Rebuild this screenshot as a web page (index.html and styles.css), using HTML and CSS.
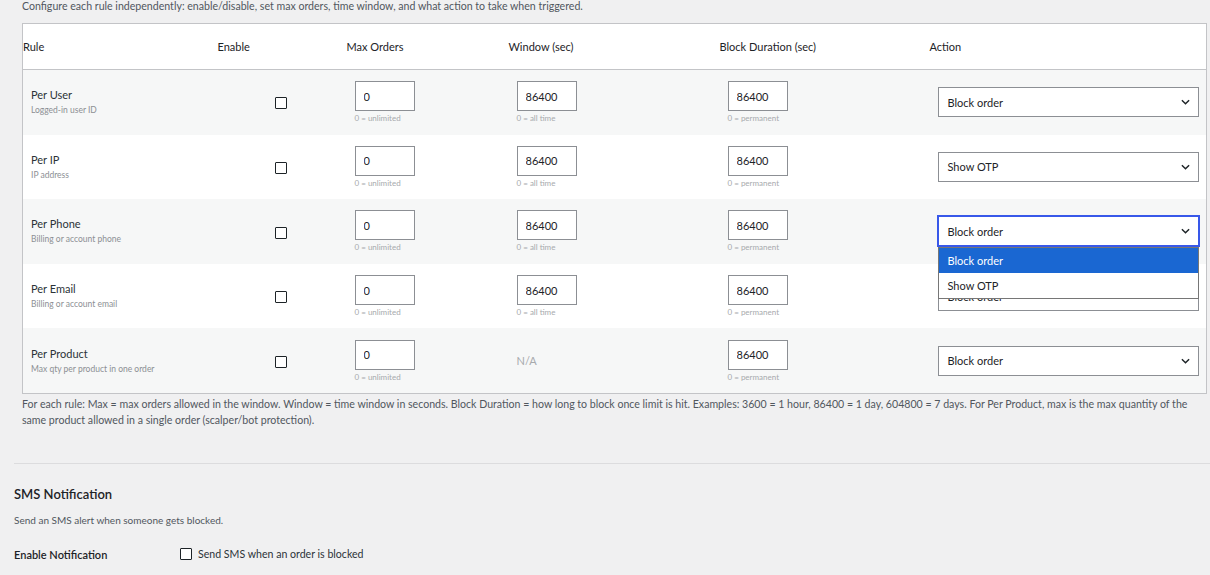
FILE: index.html
```html
<!DOCTYPE html>
<html lang="en">

<head>
    <meta charset="UTF-8">
    <meta name="viewport" content="width=device-width, initial-scale=1.0">
    <title>Order Limits</title>

    <link rel="stylesheet" href="styles.css">
</head>

<body>

    <div class="wrap">
        <div class="rules">
            <p class="intro">Configure each rule independently: enable/disable, set max orders, time window, and what action to take when triggered.</p>

            <table class="rules-table">
                <colgroup>
                    <col class="col-rule">
                    <col class="col-enable">
                    <col class="col-max">
                    <col class="col-window">
                    <col class="col-block">
                    <col>
                </colgroup>
                <thead>
                    <tr>
                        <th>Rule</th>
                        <th>Enable</th>
                        <th>Max Orders</th>
                        <th>Window (sec)</th>
                        <th>Block Duration (sec)</th>
                        <th>Action</th>
                    </tr>
                </thead>
                <tbody>
                    <tr>
                        <td><div class="rule-name">Per User</div><div class="rule-desc">Logged-in user ID</div></td>
                        <td class="center"><input type="checkbox" class="check"></td>
                        <td><input type="text" class="num" value="0"><div class="hint">0 = unlimited</div></td>
                        <td><input type="text" class="num" value="86400"><div class="hint">0 = all time</div></td>
                        <td><input type="text" class="num" value="86400"><div class="hint">0 = permanent</div></td>
                        <td><div class="select">Block order</div></td>
                    </tr>
                    <tr>
                        <td><div class="rule-name">Per IP</div><div class="rule-desc">IP address</div></td>
                        <td class="center"><input type="checkbox" class="check"></td>
                        <td><input type="text" class="num" value="0"><div class="hint">0 = unlimited</div></td>
                        <td><input type="text" class="num" value="86400"><div class="hint">0 = all time</div></td>
                        <td><input type="text" class="num" value="86400"><div class="hint">0 = permanent</div></td>
                        <td><div class="select">Show OTP</div></td>
                    </tr>
                    <tr>
                        <td><div class="rule-name">Per Phone</div><div class="rule-desc">Billing or account phone</div></td>
                        <td class="center"><input type="checkbox" class="check"></td>
                        <td><input type="text" class="num" value="0"><div class="hint">0 = unlimited</div></td>
                        <td><input type="text" class="num" value="86400"><div class="hint">0 = all time</div></td>
                        <td><input type="text" class="num" value="86400"><div class="hint">0 = permanent</div></td>
                        <td>
                            <div class="select-holder">
                                <div class="select focused">Block order</div>
                                <ul class="options">
                                    <li class="active">Block order</li>
                                    <li>Show OTP</li>
                                </ul>
                            </div>
                        </td>
                    </tr>
                    <tr>
                        <td><div class="rule-name">Per Email</div><div class="rule-desc">Billing or account email</div></td>
                        <td class="center"><input type="checkbox" class="check"></td>
                        <td><input type="text" class="num" value="0"><div class="hint">0 = unlimited</div></td>
                        <td><input type="text" class="num" value="86400"><div class="hint">0 = all time</div></td>
                        <td><input type="text" class="num" value="86400"><div class="hint">0 = permanent</div></td>
                        <td><div class="select">Block order</div></td>
                    </tr>
                    <tr>
                        <td><div class="rule-name">Per Product</div><div class="rule-desc">Max qty per product in one order</div></td>
                        <td class="center"><input type="checkbox" class="check"></td>
                        <td><input type="text" class="num" value="0"><div class="hint">0 = unlimited</div></td>
                        <td><span class="na">N/A</span></td>
                        <td><input type="text" class="num" value="86400"><div class="hint">0 = permanent</div></td>
                        <td><div class="select">Block order</div></td>
                    </tr>
                </tbody>
            </table>

            <p class="note">For each rule: Max = max orders allowed in the window. Window = time window in seconds. Block Duration = how long to block once limit is hit. Examples: 3600 = 1 hour, 86400 = 1 day, 604800 = 7 days. For Per Product, max is the max quantity of the same product allowed in a single order (scalper/bot protection).</p>
        </div>

        <hr class="divider">

        <h2 class="section-title">SMS Notification</h2>
        <p class="section-desc">Send an SMS alert when someone gets blocked.</p>

        <div class="field-row">
            <div class="field-label">Enable Notification</div>
            <label class="field-input"><input type="checkbox" class="check"> Send SMS when an order is blocked</label>
        </div>
    </div>

</body>

</html>
```

FILE: styles.css
```css
body {
    font-family: 'Lato', sans-serif;
    font-size: 11px;
    margin: 0;
    padding: 0;
    background-color: #f0f0f1;
    color: #1d2327;
    overflow: hidden;
}

.wrap {
    padding-left: 14px;
}

.rules {
    padding-left: 8px;
    padding-right: 3px;
}

.intro {
    margin: 0;
    font-size: 10.6px;
    line-height: 13px;
    color: #50575e;
}

.rules-table {
    width: 100%;
    margin-top: 10px;
    border: 1px solid #c3c4c7;
    border-collapse: collapse;
    table-layout: fixed;
    background-color: #fff;
}

.col-rule { width: 195px; }
.col-enable { width: 129px; }
.col-max { width: 162px; }
.col-window { width: 211px; }
.col-block { width: 210px; }

.rules-table th {
    height: 45px;
    padding: 0;
    text-align: left;
    font-weight: 400;
    color: #1d2327;
    border-bottom: 1px solid #c3c4c7;
}

.rules-table td {
    height: 64.6px;
    padding: 0 8px;
    vertical-align: middle;
}

.rules-table tbody tr:nth-child(odd) {
    background-color: #f6f7f7;
}

.rules-table td.center {
    text-align: center;
    padding: 0 3px 0 0;
}

.rule-name {
    font-size: 11px;
    line-height: 14px;
    color: #2c3338;
}

.rule-desc {
    margin-top: 2px;
    font-size: 8.5px;
    line-height: 12px;
    color: #8c8f94;
}

.num {
    display: block;
    box-sizing: border-box;
    width: 60px;
    height: 30px;
    margin: 0;
    padding: 0 0 0 8px;
    border: 1px solid #8c8f94;
    border-radius: 0;
    background-color: #fff;
    font-family: inherit;
    font-size: 11px;
    color: #1d2327;
}

.hint {
    margin-top: 3px;
    font-size: 8px;
    line-height: 9px;
    color: #a7aaad;
}

.na {
    color: #a7aaad;
    font-size: 11px;
}

.check {
    appearance: none;
    box-sizing: border-box;
    width: 12px;
    height: 12px;
    margin: 0;
    border: 1px solid #1d2327;
    border-radius: 1px;
    background-color: #fff;
    vertical-align: middle;
}

.select {
    box-sizing: border-box;
    width: 261px;
    height: 30px;
    padding: 0 9px;
    border: 1px solid #8c8f94;
    background-color: #fff;
    color: #1d2327;
    display: flex;
    align-items: center;
    background-image: url("data:image/svg+xml;utf8,<svg xmlns='http://www.w3.org/2000/svg' width='10' height='6' viewBox='0 0 10 6'><path d='M1 1l4 4 4-4' fill='none' stroke='%231d2327' stroke-width='1.6'/></svg>");
    background-repeat: no-repeat;
    background-position: right 8px center;
    background-size: 9px 6px;
}

.select.focused {
    border-color: #3858e9;
    box-shadow: 0 0 0 1px #3858e9;
}

.select-holder {
    position: relative;
}

.options {
    position: absolute;
    top: 31px;
    left: 0;
    width: 261px;
    box-sizing: border-box;
    margin: 0;
    padding: 0;
    list-style: none;
    background-color: #fff;
    border: 1px solid #767676;
    z-index: 2;
}

.options li {
    height: 25px;
    line-height: 25px;
    padding-left: 9px;
    color: #1d2327;
}

.options li.active {
    background-color: #1a67d2;
    color: #fff;
}

.note {
    margin: 2px 0 0 0;
    font-size: 10.6px;
    line-height: 16px;
    color: #50575e;
}

.divider {
    margin: 35px 0 0 0;
    border: 0;
    border-top: 1px solid #dcdcde;
}

.section-title {
    margin: 21px 0 0 0;
    font-size: 13px;
    font-weight: 600;
    line-height: 18px;
    color: #1d2327;
}

.section-desc {
    margin: 10px 0 0 0;
    font-size: 10px;
    line-height: 14px;
    color: #50575e;
}

.field-row {
    display: flex;
    align-items: center;
    margin-top: 21px;
}

.field-label {
    width: 166px;
    font-weight: 600;
    color: #1d2327;
}

.field-input {
    display: flex;
    align-items: center;
    gap: 6px;
    font-size: 10.6px;
    color: #2c3338;
}
```
